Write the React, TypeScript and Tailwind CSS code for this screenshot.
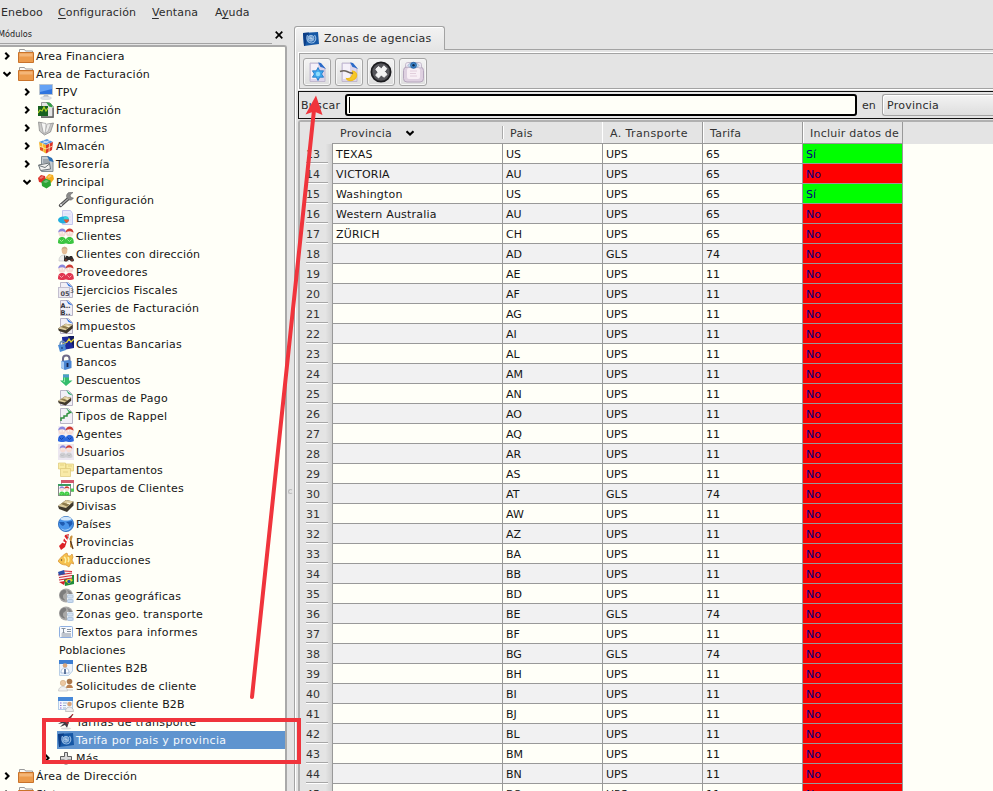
import React from 'react';

type IconName = string;

const person = (x: number, head: string, body: string) => (
  <g>
    <path d={`M${x - 0.3} 15c0-4 1-6 4-6s4.300 2 4.300 6c-2 1.300-6.300 1.300-8.300 0z`} fill={body} />
    <circle cx={x + 3.8} cy="5.200" r="3.500" fill="#f6dcd4" />
    <path d={`M${x - 0.2} 4.500c.5-5.500 7.800-5.500 8 .2c-2.500-2-5.500-2-8-.2z`} fill={head} />
    <path d={`M${x + 2} 4.800h1.200M${x + 4.600} 4.800h1.200`} stroke="#fff" strokeWidth="1.200" />
  </g>
);

const duo = (body: string, light: string) => (
  <g>
    {person(0.3, '#8a86dc', body)}
    {person(7.8, '#cc3a32', body)}
    <path d="M1.500 11.500l2 2 2-2M9.500 11.500l2 2 2-2" stroke={light} fill="none" />
  </g>
);

const page = (accent: string) => (
  <g>
    <path d="M2.500.5h8l4 4v11h-12z" fill="#f1eff6" stroke="#b9b4c6" />
    <path d="M8 0l7 5.500-2-.5-2.500-1z" fill={accent} />
  </g>
);

const money = (
  <g>
    <path d="M0 8l8-6 7.500 1.500v4L9 14l-8-3z" fill="#3f382c" />
    <path d="M0 8l8-6 7.500 1.500L8 10z" fill="#dccb9c" />
    <path d="M3 6l6 2.500 2.500-2L5.500 4.500z" fill="#8d7a4c" />
    <path d="M9 5l3 .8" stroke="#fff6d8" strokeWidth="1.200" />
  </g>
);

const moon = (
  <g>
    <circle cx="8" cy="7.500" r="7" fill="#aaa9a8" />
    <path d="M4 2.500c3-2 5 0 4 2s-3 1-3 4 2 2 2 4c-6-1-7-7-3-10z" fill="#7d7d7d" />
    <path d="M9 2c4 1 5 3 5 5l-3-1z" fill="#8a8a8a" />
    <path d="M9 6h7v9H9z" fill="#e9eff6" />
    <rect x="9.500" y="7" width="5.500" height="3" rx="1" fill="#d6e2f0" stroke="#a5bcd4" strokeWidth=".7" />
    <rect x="9.500" y="11.500" width="5.500" height="3" rx="1" fill="#c8daf0" stroke="#9db8d6" strokeWidth=".7" />
  </g>
);

const un = (
  <g>
    <path d="M0 2l15-1 1 12-15 2z" fill="#1557a5" />
    <path d="M0 2l6-.4L2 14.800 1 15z" fill="#0b3d86" />
    <path d="M4.500 4c-2 5 1 8 4 8s6-4 3-8" stroke="#8db6e2" strokeWidth="1.200" fill="none" />
    <circle cx="8" cy="7.300" r="3" fill="#5b91cc" stroke="#a9c9ea" strokeWidth=".8" />
    <path d="M8 4.500v5.500M5.500 7.300h5M6 5.500l4 3.500" stroke="#c6dcf2" strokeWidth=".6" />
  </g>
);

const icons: Record<IconName, React.ReactNode> = {
  folder: (
    <g>
      <path d="M1.500 6V1.500h5l1 1.500h7V6" fill="#fbfbf9" stroke="#9b9b9b" />
      <path d="M.5 4.500h15v10H.5z" fill="#ec9b4c" stroke="#c9732a" />
      <path d="M1.500 5.500h13v3h-13z" fill="#f4b678" />
    </g>
  ),
  tpv: (
    <g>
      <path d="M1.500.5h13v10h-13z" fill="#2f74df" stroke="#b8c3cf" />
      <path d="M2 1h12v4l-12 3z" fill="#65a2f5" />
      <path d="M6 11h4l1 2H5z" fill="#b9bfca" />
      <ellipse cx="8" cy="14" rx="5.500" ry="1.500" fill="#e1e4ea" stroke="#c3c8d0" strokeWidth=".5" />
    </g>
  ),
  fact: (
    <g>
      <path d="M3.500.5h8l4 4v11h-12z" fill="#e4e4e4" stroke="#999" />
      <path d="M8 0l5 1.500 2 4-4-1z" fill="#32a043" />
      <rect x="0" y="4" width="10" height="10" fill="#17601f" />
      <path d="M0 11l2-3 2 1 2-4 2 4 2-3" stroke="#b8d62a" strokeWidth="1.200" fill="none" />
      <path d="M3 15h12V6" stroke="#606060" fill="none" strokeWidth="1.300" />
    </g>
  ),
  informes: (
    <g>
      <path d="M.5 2l4 1 1 8 5-7 5-1-3 9-6 3-5-4z" fill="#c9c9c7" stroke="#8b8b8b" strokeWidth=".8" />
      <path d="M3 2.500l5 1v9l-2.500 1z" fill="#f6f6f4" stroke="#9a9a9a" strokeWidth=".7" />
      <path d="M9 4l4-.5-3 8-3 1.500z" fill="#ececea" stroke="#a5a5a5" strokeWidth=".7" />
    </g>
  ),
  almacen: (
    <g>
      <path d="M1 4l8-3 6 3-7 3z" fill="#5796e0" />
      <path d="M5 2.600l6 3M12 2.500L4 5.500" stroke="#fff" strokeWidth=".7" />
      <path d="M1 4l7 3v8.500L2 12z" fill="#f6b62a" />
      <path d="M8 7l7-3-1 8-6 3.500z" fill="#dc3326" />
      <path d="M1.500 8L8 11l6.500-3M4.500 5.500L5 14M11.500 5.500L11 14" stroke="#fdeab8" strokeWidth=".8" fill="none" />
      <path d="M2 9l3 1v3l-3-1z" fill="#e2522c" />
    </g>
  ),
  tesoreria: (
    <g>
      <path d="M3.500.5h7l4.500 4v11h-11.500z" fill="#c5ccd2" stroke="#848f96" />
      <path d="M9 0l5 2 1.500 4-4-1z" fill="#2b6fb5" />
      <path d="M5 4h6M5 6h7" stroke="#7a838a" />
      <path d="M.5 9l11-2 1 6-10 1.500z" fill="#f3f3f1" stroke="#6c7479" />
      <path d="M1 9.500l6 2 5-4" stroke="#6c7479" fill="none" />
    </g>
  ),
  principal: (
    <g>
      <path d="M0 4l3-3 4 1 1 4-3 3-4-1z" fill="#dc3128" />
      <path d="M8 3l3-3 4 1 1 4-3 4-4-1z" fill="#f6ad1c" />
      <path d="M3.500 8l4-3.500 5 2 .5 5L8.500 14.500 4 12z" fill="#2ca637" />
      <path d="M1 4l3-2 2 1-3 2zM9 3l3-2 2 1-3 2zM5 8l3-2 3 1-3 2z" fill="#fff" opacity=".35" />
    </g>
  ),
  config: (
    <g>
      <path d="M2.500 13.500L11 6" stroke="#4e4e4e" strokeWidth="3.400" strokeLinecap="round" />
      <path d="M3 13L11 6" stroke="#a9a9a9" strokeWidth="1.200" />
      <path d="M10 1c-2 2-2 4 0 6s4 1 5.500-1L13 5.500 12 3l3-2.500C13 0 11 0 10 1z" fill="#8b8b8b" stroke="#666" strokeWidth=".6" />
      <circle cx="3" cy="13" r="1" fill="#eee" />
    </g>
  ),
  empresa: (
    <g>
      <path d="M4.500.5h8l2 3v11h-10z" fill="#e9e9fb" stroke="#c4c6ee" />
      <path d="M6 4h7M6 7h7M7 10h6" stroke="#d9dbf6" />
      <ellipse cx="5.500" cy="10" rx="5.500" ry="3.500" fill="#22aede" />
      <path d="M5.500 9.500l1-3.500c3 0 4 1 4.500 3z" fill="#35d3dd" />
      <path d="M5.500 9.500h5.500c0 2-1 3-3 3.500z" fill="#e4552e" />
    </g>
  ),
  clientes: duo('#3cc542', '#9aeb92'),
  direccion: (
    <g>
      <path d="M1 15c0-4 2-6 5-6s5 2 5 6z" fill="#eeeeee" stroke="#bdbdbd" strokeWidth=".6" />
      <path d="M6 9l1 1v5H6z" fill="#444" />
      <ellipse cx="6.500" cy="4.500" rx="2.800" ry="3.800" fill="#e5bd98" />
      <path d="M3.700 4C3-.5 10-.5 9.400 4 8 2 5 2 3.700 4z" fill="#c9aa88" />
      <path d="M6 14l2-4h2l1 1 1-1h2l2 4c0 2-3.500 2-4 0h-2c-.5 2-4 2-4 0z" fill="#2f2a2a" />
      <path d="M7 14h2M13 14h2" stroke="#a33d2c" />
    </g>
  ),
  proveedores: duo('#e0354f', '#f7a1aa'),
  ejercicios: (
    <g>
      {page('#2b70dc')}
      <rect x=".5" y="5.500" width="11" height="10" fill="#eceaf1" stroke="#c3bfcf" />
      <text x="2.500" y="14" fontSize="6.500" fontWeight="700" letterSpacing="0" fill="#4b4b54">05</text>
      <text x="12" y="11" fontSize="6" letterSpacing="0" fill="#3b3b44">3</text>
    </g>
  ),
  series: (
    <g>
      {page('#2b70dc')}
      <text x="2.500" y="8" fontSize="6.500" fontWeight="700" letterSpacing="0" fill="#33333a">A..</text>
      <text x="2.500" y="15" fontSize="6.500" fontWeight="700" letterSpacing="0" fill="#33333a">B..</text>
    </g>
  ),
  impuestos: <g>{page('#2b70dc')}<g transform="translate(0 4) scale(.95 .82)">{money}</g></g>,
  cuentas: (
    <g>
      <path d="M4 1l12-1v12l-11 2z" fill="#1c2a9a" />
      <path d="M10 0h6v12z" fill="#121c60" />
      <path d="M5 8l4-2 2-3 2 3 3-3" stroke="#e8dc3a" strokeWidth="1.300" fill="none" />
      <path d="M2 9c0-5 5-5 5 0" stroke="#6c8fb5" fill="none" strokeWidth="1.500" />
      <path d="M0 9l7-1 1 6-6 2z" fill="#4a8ad6" />
      <path d="M4 11v2" stroke="#112c66" />
    </g>
  ),
  bancos: (
    <g>
      <path d="M5 8V4.500c0-4 6.500-4 6.500 0V8" stroke="#6e6a88" strokeWidth="2" fill="none" />
      <path d="M3 7l8-1 2.500 1v7l-6.500 2-4-2z" fill="#4b86d2" />
      <path d="M3 7l3 1v7.500l-3-2z" fill="#a9ccf2" />
      <path d="M9.500 9v4" stroke="#17264f" strokeWidth="1.800" />
    </g>
  ),
  descuentos: (
    <g>
      <path d="M5 2.500h6v6h3.500L8 14 2 8.500h3z" fill="#33bd6b" />
      <path d="M5 2.500h6v3H5z" fill="#4f9ccb" />
      <path d="M6 5.500h1v5L4.500 9H6z" fill="#8fe5a5" />
    </g>
  ),
  formas: <g>{page('#2cab6d')}<g transform="translate(0 5) scale(.85 .75)">{money}</g></g>,
  rappel: (
    <g>
      {page('#39b262')}
      <path d="M3 13v-3h3V8h3V6l4-2" stroke="#2f8f3f" strokeWidth="1.500" fill="none" />
    </g>
  ),
  agentes: (
    <g>
      <rect width="16" height="16" fill="#f4f0f6" />
      {duo('#2d68de', '#1843a5')}
    </g>
  ),
  usuarios: (
    <g>
      <rect width="16" height="16" fill="#ece7f0" />
      <g transform="translate(1.500 1) scale(.82)">{duo('#cfcfd3', '#b5b5ba')}</g>
    </g>
  ),
  departamentos: (
    <g stroke="#dcc878" strokeWidth=".7">
      <path d="M.5 1h7v6h-7zM8 2h7.500v7H8z" fill="#f9eca4" />
      <path d="M2.500 6.500h10v8h-10z" fill="#f9eaa6" />
      <path d="M2 3h4M10 4h4M5 10h5" />
    </g>
  ),
  grupos: (
    <g>
      <rect x="3.500" y=".5" width="12" height="11" fill="#fff" stroke="#aaa" />
      <rect x="3" y="0" width="13" height="3" fill="#d2576a" />
      <path d="M12 10h4" stroke="#4ccf54" strokeWidth="3" />
      <rect x=".5" y="4.500" width="12" height="11" fill="#fff" stroke="#888" />
      <rect x="0" y="4" width="13" height="2" fill="#3c9c62" />
      <g transform="translate(1.200 6) scale(.66 .6)">{duo('#3ccb42', '#9aeb92')}</g>
    </g>
  ),
  divisas: money,
  paises: (
    <g>
      <circle cx="8" cy="8" r="7.600" fill="#4b96ea" stroke="#2263b8" strokeWidth=".8" />
      <path d="M2 3c3-3 9-3 12 0-3 2-9 2-12 0z" fill="#d3e8fc" />
      <path d="M1 6h5l1 2-2 2-2-1zM8 6l6-1 .5 3-3 3-1-3z" fill="#1f5bb0" />
      <path d="M3 12c3 3 7 2 10-1-1 4-8 5-10 1z" fill="#b6dafb" />
    </g>
  ),
  provincias: (
    <g>
      <path d="M1 12l4-4 2-7 4-1-2 7-2 6-4 3z" fill="#dd2227" />
      <path d="M3 7l4 2M6 3l3 4" stroke="#fff" strokeWidth="1.500" fill="none" />
      <path d="M9 1l5 8" stroke="#aaa" strokeWidth="1" />
      <path d="M12 3c1-2 3-2 2.500 0L13 9l1 5-2-1z" fill="#cb9440" />
      <path d="M12.500 7l2.500 8" stroke="#5a3618" strokeWidth="1.300" />
    </g>
  ),
  traducciones: (
    <g>
      <path d="M0 9c3-4 6-7 9-8l1 3c2 0 3 0 4-2l1 3-1 3 2 4-3-1-2 4-3-2c-3 0-6-1-8-4z" fill="#f5c04c" stroke="#d68f30" strokeWidth=".7" />
      <path d="M6 5c2 1 2 4 1 6M10 5c1 2 1 4 0 5" stroke="#fdf2a7" strokeWidth="1.500" fill="none" />
      <circle cx="3.500" cy="8" r=".7" fill="#543" />
    </g>
  ),
  idiomas: (
    <g>
      <path d="M5 5h11v9l-9 2z" fill="#208d3b" />
      <path d="M7 11l4-3 4 2-4 4z" fill="#f1d82c" />
      <circle cx="11" cy="11.500" r="1.700" fill="#2052a5" />
      <path d="M0 2l6-2 8 1v7.500l-7 .5-6 2z" fill="#f7f0f0" />
      <path d="M0 5l14-2M1 7.500l13-2M1 10L14 8M6 1l8 .5" stroke="#d22a35" strokeWidth="1.200" />
      <path d="M0 2l6-2 1 4-6 1.500z" fill="#2b4fa8" />
      <path d="M1 12l6-1-1 4z" fill="#d5202b" />
    </g>
  ),
  moon,
  textos: (
    <g>
      <rect x="1.500" y="2.500" width="13" height="11" rx="1" fill="#f7fafd" stroke="#8eafe0" />
      <path d="M3.500 4.500h4M5.500 4.500v4M4.500 8.500h2M9 5.500h4M9 7.500h4M3.500 10h9.500M3.500 12h9.500" stroke="#7b8794" strokeWidth=".9" />
    </g>
  ),
  b2b: (
    <g>
      <path d="M1.500 1h13v10l-4 4.500h-9z" fill="#edf4fc" stroke="#b9cfe6" />
      <rect x="1" y="0" width="14" height="4" fill="#3c7ed2" />
      <circle cx="7" cy="5.500" r="2.300" fill="#d9a67b" />
      <path d="M3 13c0-4 2-5 4-5s4 1 4 5z" fill="#fff" stroke="#7fa0c6" strokeWidth=".6" />
      <path d="M7 9v5" stroke="#27477a" strokeWidth="1.400" />
    </g>
  ),
  solicitudes: (
    <g>
      <circle cx="11.500" cy="3.500" r="2.800" fill="#aa774a" />
      <path d="M8 10c0-4 6-5 7 0z" fill="#bb8150" />
      <circle cx="5" cy="5" r="2.700" fill="#ecc8a2" stroke="#cfab82" strokeWidth=".6" />
      <path d="M.5 13c0-6 9-6 9 0z" fill="#f1f1f1" stroke="#bbb" strokeWidth=".6" />
      <path d="M9 12h6" stroke="#c9c9c9" />
    </g>
  ),
  grupob2b: (
    <g>
      <rect x=".5" y="1.500" width="14" height="12" fill="#f3f7fd" stroke="#b3cce9" />
      <rect x="0" y="1" width="15" height="4" fill="#4688d8" />
      <path d="M2 7h1.500M2 9.500h1.500M2 12h1.500" stroke="#8d6bd4" strokeWidth="1.200" />
      <path d="M5 7h4M5 9.500h3M5 12h3" stroke="#9db2cc" />
      <circle cx="11.500" cy="8" r="2.300" fill="#d8a378" />
      <path d="M7.500 15.500c0-6 8-6 8 0z" fill="#eee" stroke="#a7a7a7" strokeWidth=".6" />
    </g>
  ),
  tarifas: (
    <g>
      <path d="M0 10l6-4 4-2 5-4-4 8-2 6-2-3-5 2 4-4z" fill="#3e3a44" />
      <path d="M6 6l4 4M12 4l3-4" stroke="#a62d35" strokeWidth="1.200" />
      <ellipse cx="8" cy="14.500" rx="5" ry="1" fill="#ddd" />
    </g>
  ),
  un,
  mas: <path d="M6.500 2.500h3V6.500h4v3.500h-4v4h-3v-4h-4V6.500h4z" fill="#d9d9d9" stroke="#5f5f5f" />,
};

const Icon = ({ name }: { name: IconName }) => (
  <svg viewBox="0 0 16 16" className="block h-4 w-4 shrink-0">{icons[name]}</svg>
);

const Chevron = ({ open }: { open?: boolean }) => (
  <svg viewBox="0 0 8 8" className="block h-2 w-2 shrink-0">
    <path d={open ? 'M.5 2.300L4 5.500 7.500 2.300' : 'M2.300 .8L5.500 4 2.300 7.200'} fill="none" stroke="#000" strokeWidth="2.100" />
  </svg>
);

type Node = { d: 0 | 1 | 2; icon?: IconName; label: string; fold?: 'open' | 'closed'; sel?: boolean; t?: string };

const tree: Node[] = [
  { d: 0, icon: 'folder', label: 'Area Financiera', fold: 'closed', t: 'tracking-[0.24px]' },
  { d: 0, icon: 'folder', label: 'Area de Facturación', fold: 'open', t: 'tracking-[0.24px]' },
  { d: 1, icon: 'tpv', label: 'TPV', fold: 'closed' },
  { d: 1, icon: 'fact', label: 'Facturación', fold: 'closed' },
  { d: 1, icon: 'informes', label: 'Informes', fold: 'closed', t: 'tracking-[0.4px]' },
  { d: 1, icon: 'almacen', label: 'Almacén', fold: 'closed' },
  { d: 1, icon: 'tesoreria', label: 'Tesorería', fold: 'closed', t: 'tracking-[0.5px]' },
  { d: 1, icon: 'principal', label: 'Principal', fold: 'open' },
  { d: 2, icon: 'config', label: 'Configuración' },
  { d: 2, icon: 'empresa', label: 'Empresa' },
  { d: 2, icon: 'clientes', label: 'Clientes' },
  { d: 2, icon: 'direccion', label: 'Clientes con dirección' },
  { d: 2, icon: 'proveedores', label: 'Proveedores', t: 'tracking-[0.35px]' },
  { d: 2, icon: 'ejercicios', label: 'Ejercicios Fiscales', t: 'tracking-[0.2px]' },
  { d: 2, icon: 'series', label: 'Series de Facturación', t: 'tracking-[0.25px]' },
  { d: 2, icon: 'impuestos', label: 'Impuestos', t: 'tracking-[0.3px]' },
  { d: 2, icon: 'cuentas', label: 'Cuentas Bancarias', t: 'tracking-[0.18px]' },
  { d: 2, icon: 'bancos', label: 'Bancos' },
  { d: 2, icon: 'descuentos', label: 'Descuentos', t: 'tracking-[0px]' },
  { d: 2, icon: 'formas', label: 'Formas de Pago', t: 'tracking-[0.33px]' },
  { d: 2, icon: 'rappel', label: 'Tipos de Rappel', t: 'tracking-[0.25px]' },
  { d: 2, icon: 'agentes', label: 'Agentes' },
  { d: 2, icon: 'usuarios', label: 'Usuarios' },
  { d: 2, icon: 'departamentos', label: 'Departamentos', t: 'tracking-[0.08px]' },
  { d: 2, icon: 'grupos', label: 'Grupos de Clientes', t: 'tracking-[0.18px]' },
  { d: 2, icon: 'divisas', label: 'Divisas' },
  { d: 2, icon: 'paises', label: 'Países' },
  { d: 2, icon: 'provincias', label: 'Provincias', t: 'tracking-[0.25px]' },
  { d: 2, icon: 'traducciones', label: 'Traducciones', t: 'tracking-[0.25px]' },
  { d: 2, icon: 'idiomas', label: 'Idiomas', t: 'tracking-[0.35px]' },
  { d: 2, icon: 'moon', label: 'Zonas geográficas', t: 'tracking-[0.22px]' },
  { d: 2, icon: 'moon', label: 'Zonas geo. transporte', t: 'tracking-[0.24px]' },
  { d: 2, icon: 'textos', label: 'Textos para informes', t: 'tracking-[0.35px]' },
  { d: 2, label: 'Poblaciones' },
  { d: 2, icon: 'b2b', label: 'Clientes B2B', t: 'tracking-[0.15px]' },
  { d: 2, icon: 'solicitudes', label: 'Solicitudes de cliente' },
  { d: 2, icon: 'grupob2b', label: 'Grupos cliente B2B', t: 'tracking-[0.18px]' },
  { d: 2, icon: 'tarifas', label: 'Tarifas de transporte', t: 'tracking-[0.3px]' },
  { d: 2, icon: 'un', label: 'Tarifa por pais y provincia', sel: true, t: 'tracking-[0.33px]' },
  { d: 2, icon: 'mas', label: 'Más', fold: 'closed' },
  { d: 0, icon: 'folder', label: 'Área de Dirección', fold: 'closed', t: 'tracking-[0.22px]' },
  { d: 0, icon: 'folder', label: 'Sistema', fold: 'closed' },
];

const gutters = ['w-[18px] pr-[7px]', 'w-[38px] pr-[7px]', 'w-[57px] pr-[6px]'];

const TreeRow = ({ n }: { n: Node }) => (
  <div className="flex h-[18px] shrink-0 items-center">
    <div className={`flex shrink-0 justify-end ${gutters[n.d]}`}>
      {n.fold && <Chevron open={n.fold === 'open'} />}
    </div>
    <div className={`flex h-[18px] flex-1 items-center whitespace-pre ${n.sel ? 'bg-[#5f94cf] text-[#f4f8fc]' : ''}`}>
      {n.icon ? <div className={n.d === 2 ? 'ml-px mr-[2px]' : 'mr-[2px]'}><Icon name={n.icon} /></div> : <div className="w-[2px]" />}
      <span className={`pt-[2px] ${n.t ?? 'tracking-[0.14px]'}`}>{n.label}</span>
    </div>
  </div>
);

type Row = [string, string, string, string, boolean];
const ups = (code: string): Row => ['', code, 'UPS', '11', false];
const gls = (code: string): Row => ['', code, 'GLS', '74', false];

const rows: Row[] = [
  ['TEXAS', 'US', 'UPS', '65', true],
  ['VICTORIA', 'AU', 'UPS', '65', false],
  ['Washington', 'US', 'UPS', '65', true],
  ['Western Australia', 'AU', 'UPS', '65', false],
  ['ZÜRICH', 'CH', 'UPS', '65', false],
  gls('AD'), ups('AE'), ups('AF'), ups('AG'), ups('AI'), ups('AL'), ups('AM'), ups('AN'), ups('AO'),
  ups('AQ'), ups('AR'), ups('AS'), gls('AT'), ups('AW'), ups('AZ'), ups('BA'), ups('BB'), ups('BD'),
  gls('BE'), ups('BF'), gls('BG'), ups('BH'), ups('BI'), ups('BJ'), ups('BL'), ups('BM'), ups('BN'), ups('BO'),
];

const cell = 'h-full border-r border-b border-[#999] pl-[3px] leading-[22px]';

const TableRow = ({ r, i }: { r: Row; i: number }) => (
  <div className="flex h-5 shrink-0">
    <div className="w-[32px] shrink-0 bg-gradient-to-r from-[#e4e4e4] from-80% to-[#d0d0d0] pl-[6px] pr-1">
      <div className="h-5 border-b border-white">
        <div className="h-[19px] border-b border-[#a6a6a6] leading-[22px] text-[#333]">{i + 13}</div>
      </div>
    </div>
    <div className={`flex w-[571px] border-l border-[#999] ${i % 2 ? 'bg-[#f1f1f2]' : 'bg-[#fffff8]'}`}>
      <div className={`w-[170px] tracking-[0.2px] ${cell}`}>{r[0]}</div>
      <div className={`w-[100px] ${cell}`}>{r[1]}</div>
      <div className={`w-[100px] ${cell}`}>{r[2]}</div>
      <div className={`w-[100px] ${cell}`}>{r[3]}</div>
      <div className={`w-[100px] text-[#000080] ${cell} ${r[4] ? 'bg-[#00ff00]' : 'bg-[#ff0000]'}`}>{r[4] ? 'Sí' : 'No'}</div>
    </div>
  </div>
);

const ToolButton = ({ children }: { children: React.ReactNode }) => (
  <div className="flex h-7 w-7 items-center justify-center rounded-[3px] border border-[#a5a5a5] bg-gradient-to-b from-[#f4f4f4] to-[#dedede] shadow-[inset_0_0_0_1px_#f7f7f7]">
    <svg viewBox="0 0 24 24" className="h-6 w-6 shrink-0">{children}</svg>
  </div>
);

const toolPage = (
  <g>
    <path d="M5 3h10l5 5v13.500H5z" fill="#ddd5ea" stroke="#b9b0c8" strokeWidth=".8" />
    <path d="M6 4h7v15H6z" fill="#f5f1f9" />
    <path d="M13 2.500l3 .5 5 6-3.500-1.500-2-.5z" fill="#2b6bc9" />
  </g>
);

export default function App() {
  return (
    <div className="relative flex h-[791px] w-[993px] flex-col overflow-hidden bg-[#e4e4e4] font-['DejaVu_Sans',sans-serif] text-[11px] text-[#151515]">
      <div className="flex h-[26px] shrink-0 pl-px leading-[25px] tracking-[0.14px] text-[#2c2c2c]">
        <span className="w-[57px]">Eneboo</span>
        <span className="w-[94px]"><u className="underline-offset-2">C</u>onfiguración</span>
        <span className="w-[63px]"><u className="underline-offset-2">V</u>entana</span>
        <span>A<u className="underline-offset-2">y</u>uda</span>
      </div>
      <div className="flex min-h-0 flex-1">
        <div className="flex w-[287px] shrink-0 flex-col">
          <div className="flex h-[19px] shrink-0 justify-between pr-1">
            <div className="h-[18px] w-[272px] border-b border-[#a3a3a3] font-['DejaVu_Sans_Condensed','DejaVu_Sans',sans-serif] text-[9px] leading-[16px] tracking-[0.05px] text-[#222]">
              <span className="-ml-[2px]">Módulos</span>
            </div>
            <svg viewBox="0 0 8 8" className="mt-[5px] h-2 w-2"><path d="M.7.700l6.600 6.600M7.300.700L.7 7.300" stroke="#000" strokeWidth="1.700" /></svg>
          </div>
          <div className="flex min-h-0 flex-1 flex-col overflow-hidden rounded-tr-[3px] border-t-2 border-r-2 border-[#a9a9a9] bg-[#fffff8]">
            {tree.map((n, i) => <TreeRow key={i} n={n} />)}
          </div>
        </div>
        <div className="flex w-[7px] shrink-0 items-center justify-center pt-[166px]">
          <div className="h-[5px] w-[5px] rounded-full border border-[#bbb] border-r-transparent" />
        </div>
        <div className="flex min-w-0 flex-1 flex-col">
          <div className="flex h-6 shrink-0">
            <div className="flex w-[151px] items-center rounded-t-[3px] border border-b-0 border-[#a3a3a3] bg-gradient-to-b from-[#f3f3f3] to-[#e5e5e5] pl-2 text-[#2c2c2c] shadow-[inset_1px_1px_0_#fff]">
              <Icon name="un" />
              <span className="ml-[5px] pt-px tracking-[0.23px]">Zonas de agencias</span>
            </div>
            <div className="flex-1 border-b border-[#a3a3a3]" />
          </div>
          <div className="flex min-h-0 flex-1 flex-col border-l border-[#a3a3a3] pl-[3px] shadow-[inset_1px_0_0_#fff]">
            <div className="mt-[2px] flex h-[38px] shrink-0 border-y border-l border-white">
              <div className="flex flex-1 items-start gap-1 border-t border-b border-l border-[#a3a3a3] pl-[3px] pt-1">
                <ToolButton>
                  {toolPage}
                  <path d="M13 7.500l1.700 3.300h3.900L16.600 14l2 3.200h-3.900L13 20.500l-1.700-3.300H7.400l2-3.200-2-3.200h3.900z" fill="#3fa9ee" stroke="#1b74c4" strokeWidth=".8" />
                  <circle cx="13" cy="14" r="2.200" fill="#8fdcfc" />
                </ToolButton>
                <ToolButton>
                  {toolPage}
                  <path d="M15.500 11c5.500 1 5 6.500 1.500 8.500s-7 1-7.500-1c4 1 7-3 6-7.500z" fill="#f6c829" stroke="#f0bd1e" strokeWidth="1.200" />
                  <path d="M3 11.500c3-1 5-1 7 0s4 2 6 1.500" fill="none" stroke="#6b635c" strokeWidth="1.600" />
                </ToolButton>
                <ToolButton>
                  <circle cx="12" cy="12" r="9.600" fill="#55555a" stroke="#1c1c1f" strokeWidth="1.800" />
                  <path d="M6.800 9.200l2.600-2.700 3 2.300 2.400-3 3 2.700-2.200 3 2.400 3-2.900 2.700-2.900-2.200-2.600 2.900-2.900-2.600 2.300-3z" fill="#f2f2f2" stroke="#f2f2f2" strokeLinejoin="round" />
                </ToolButton>
                <ToolButton>
                  <rect x="2.500" y="7" width="20" height="15" rx="3.500" fill="#ded0e0" stroke="#b5a6bd" />
                  <path d="M4.500 7V4.500c0-1 1-2 2-2h12c1 0 2 1 2 2V8z" fill="#ece6f1" stroke="#b9aec3" strokeWidth=".8" />
                  <rect x="6" y="8" width="13" height="11" rx="2" fill="#f8eff5" />
                  <path d="M9 11h7M9 13.500h6M9 16h7" stroke="#dcc7d6" strokeWidth=".8" />
                  <path d="M7 5.500c2-4 9-4 11 0-2 3.500-9 3.500-11 0z" fill="#cfe2f3" stroke="#7a9cbd" strokeWidth=".6" />
                  <circle cx="12.500" cy="5.300" r="3" fill="#3a83c9" stroke="#1f5796" strokeWidth=".7" />
                  <circle cx="12.500" cy="5.300" r="1.200" fill="#0e2a4c" />
                </ToolButton>
              </div>
            </div>
            <div className="mt-[1px] flex h-[28px] shrink-0 items-center border-y border-l border-[#111] pl-[2px] text-[#2c2c2c]">
              <span className="w-[44px] pt-[2px] tracking-[0.3px]">Buscar</span>
              <div className="flex h-[22px] w-[512px] items-center rounded-[3px] border-2 border-black bg-[#fffff8] pl-[2px]">
                <div className="h-4 w-px bg-black" />
              </div>
              <span className="ml-[5px] w-[20px] pt-[2px]">en</span>
              <div className="flex h-[22px] flex-1 items-center rounded-l-[3px] border border-r-0 border-[#a3a3a3] bg-gradient-to-b from-[#f3f3f3] to-[#dedede] pl-1 pt-[2px] tracking-[0.25px] shadow-[inset_1px_1px_0_#fff]">Provincia</div>
            </div>
            <div className="mt-[1px] flex min-h-0 flex-1 flex-col rounded-tl-[3px] border-t-2 border-l-2 border-[#b0b0b0] bg-[#fffff8]">
              <div className="flex h-[22px] shrink-0 bg-[#e4e4e4] leading-[23px] tracking-[0.25px] text-[#333]">
                <div className="w-[32px]" />
                <div className="flex w-[571px] border-b border-[#999]">
                  <div className="flex w-[172px] items-center pl-2">
                    <span className="w-[66px] pt-[2px]">Provincia</span><div className="pt-px"><Chevron open /></div>
                    <div className="ml-auto h-[13px] w-px bg-[#aaa]" />
                    <div className="h-[13px] w-px bg-white" />
                  </div>
                  <div className="w-[99px] border-r border-white pl-[6px]">Pais</div>
                  <div className="w-[100px] border-r border-[#999] pl-[7px] tracking-[0.4px]">A. Transporte</div>
                  <div className="w-[100px] border-l border-white border-r border-r-[#999] pl-[6px]">Tarifa</div>
                  <div className="flex-1 overflow-hidden whitespace-nowrap border-l border-white border-r border-r-[#999] pl-[6px]">Incluir datos de</div>
                </div>
              </div>
              <div className="flex min-h-0 flex-1 flex-col overflow-hidden">
                {rows.map((r, i) => <TableRow key={i} r={r} i={i} />)}
              </div>
            </div>
          </div>
        </div>
      </div>
      <div className="absolute left-[42px] top-[718px] h-[46px] w-[259px] border-4 border-[#f0343c]" />
      <svg viewBox="0 0 993 791" className="pointer-events-none absolute inset-0 h-full w-full">
        <path d="M252 697L314 110" stroke="#f0343c" strokeWidth="4" strokeLinecap="round" />
        <path d="M316 95.500L322.500 115 314 111.500 305.500 114.500z" fill="#f0343c" />
      </svg>
    </div>
  );
}
